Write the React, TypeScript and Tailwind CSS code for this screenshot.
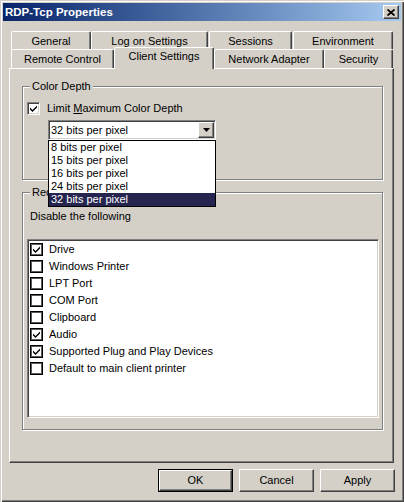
import React from "react";

const raised =
  "bg-[#d4d0c8] border border-t-white border-l-white border-r-[#404040] border-b-[#404040] shadow-[inset_-1px_-1px_0_#808080]";
const sunken =
  "border border-t-[#808080] border-l-[#808080] border-r-white border-b-white shadow-[inset_1px_1px_0_#404040,inset_-1px_-1px_0_#d4d0c8]";
const etched =
  "relative w-[361px] border border-[#808080] shadow-[1px_1px_0_#fff,inset_1px_1px_0_#fff]";

function CheckMark() {
  return (
    <svg width="7" height="7" viewBox="0 0 7 7">
      <path d="M0 2.5L2.5 5L7 0.5V2.5L2.5 7L0 4.5Z" fill="#000" />
    </svg>
  );
}

function Check3D({ checked }: { checked: boolean }) {
  return (
    <div className={`w-[13px] h-[13px] bg-white shrink-0 flex items-center justify-center ${sunken}`}>
      {checked && <CheckMark />}
    </div>
  );
}

function FlatCheck({ checked }: { checked: boolean }) {
  return (
    <div className="w-[13px] h-[13px] bg-white shrink-0 flex items-center justify-center border border-black shadow-[inset_0_0_0_1px_#5a5a5a]">
      {checked && <CheckMark />}
    </div>
  );
}

function Tab({ label, className, selected }: { label: string; className: string; selected?: boolean }) {
  return (
    <div
      className={`${className} shrink-0 bg-[#d4d0c8] border-t border-l border-r border-t-white border-l-white border-r-[#404040] rounded-t-[2px] shadow-[inset_-1px_0_0_#808080] text-center leading-[13px] ${
        selected ? "h-[22px] -mb-px" : "h-full"
      }`}
    >
      {label}
    </div>
  );
}

const items: [string, boolean][] = [
  ["Drive", true],
  ["Windows Printer", false],
  ["LPT Port", false],
  ["COM Port", false],
  ["Clipboard", false],
  ["Audio", true],
  ["Supported Plug and Play Devices", true],
  ["Default to main client printer", false],
];

const depths = ["8 bits per pixel", "15 bits per pixel", "16 bits per pixel", "24 bits per pixel", "32 bits per pixel"];

export default function App() {
  return (
    <div className="w-[404px] h-[502px] p-[3px] bg-[#d4d0c8] text-black text-[11px] font-['Liberation_Sans',Arial,sans-serif] shadow-[inset_1px_1px_0_#d4d0c8,inset_2px_2px_0_#fff,inset_-1px_-1px_0_#404040,inset_-2px_-2px_0_#808080] overflow-hidden select-none">
      {/* Title bar */}
      <div className="h-[18px] flex items-center justify-between bg-linear-to-r from-[#0a246a] to-[#a6caf0]">
        <span className="pl-[2px] text-white font-bold text-[11.5px] leading-[13px]">RDP-Tcp Properties</span>
        <div className={`w-[16px] h-[14px] mr-[2px] flex items-center justify-center ${raised}`}>
          <svg width="8" height="7" viewBox="0 0 8 7">
            <path d="M0.5 0.5L7.5 6.5M7.5 0.5L0.5 6.5" stroke="#000" strokeWidth="1.8" />
          </svg>
        </div>
      </div>

      {/* Tabs row 1 */}
      <div className="mt-[10px] ml-[6px] flex h-[18px]">
        <Tab label="General" className="ml-[2px] w-[80px] pt-[3px]" />
        <Tab label="Log on Settings" className="w-[117px] pt-[3px]" />
        <Tab label="Sessions" className="ml-[1px] w-[83px] pt-[3px]" />
        <Tab label="Environment" className="ml-[1px] w-[100px] pt-[3px]" />
      </div>
      {/* Tabs row 2 */}
      <div className="relative z-10 ml-[6px] flex items-end h-[19px]">
        <Tab label="Remote Control" className="ml-[2px] w-[103px] pt-[3px]" />
        <Tab label="Client Settings" className="w-[100px] pt-[2px]" selected />
        <Tab label="Network Adapter" className="w-[110px] pt-[3px]" />
        <Tab label="Security" className="w-[69px] pt-[3px]" />
      </div>

      {/* Panel */}
      <div className="ml-[6px] w-[385px] h-[395px] border-t border-l border-r border-b border-t-white border-l-white border-r-[#404040] border-b-[#404040] shadow-[inset_-1px_-1px_0_#808080] pt-[17px] pl-[12px]">
        {/* Color Depth */}
        <div className={`${etched} h-[94px] pl-[4px] pt-[15px]`}>
          <span className="absolute -top-[7px] left-[7px] px-[2px] bg-[#d4d0c8] leading-[13px]">Color Depth</span>
          <div className="flex items-center gap-[7px] h-[13px]">
            <Check3D checked />
            <span className="leading-[13px]">
              Limit <span className="underline">M</span>aximum Color Depth
            </span>
          </div>
          <div className={`relative mt-[5px] ml-[21px] w-[168px] h-[20px] bg-white flex items-center ${sunken}`}>
            <span className="flex-1 pl-[2px] leading-[13px]">32 bits per pixel</span>
            <div className={`w-[16px] h-[16px] mr-[1px] flex items-center justify-center ${raised}`}>
              <svg width="7" height="4" viewBox="0 0 7 4">
                <path d="M0 0H7L3.5 4Z" fill="#000" />
              </svg>
            </div>
            <div className="absolute z-20 top-[19px] -left-px w-[168px] bg-white border border-black">
              {depths.map((d, i) => (
                <div
                  key={d}
                  className={`h-[13px] leading-[13px] pl-[2px] ${
                    i === depths.length - 1 ? "bg-[#25254f] text-white" : ""
                  }`}
                >
                  {d}
                </div>
              ))}
            </div>
          </div>
        </div>

        {/* Redirection */}
        <div className={`${etched} mt-[12px] h-[238px] pl-[4px] pt-[17px]`}>
          <span className="absolute -top-[7px] left-[7px] px-[2px] bg-[#d4d0c8] leading-[13px]">Redirection</span>
          <div className="pl-[3px] leading-[13px]">Disable the following</div>
          <div className={`mt-[16px] w-[352px] h-[179px] bg-white pt-[1px] ${sunken}`}>
            {items.map(([label, checked]) => (
              <div key={label} className="h-[17px] flex items-center gap-[6px] pl-[2px]">
                <FlatCheck checked={checked} />
                <span className="leading-[13px]">{label}</span>
              </div>
            ))}
          </div>
        </div>
      </div>

      {/* Buttons */}
      <div className="mt-[6px] ml-[6px] w-[386px] flex justify-end gap-[6px]">
        <div className="w-[75px] h-[23px] border border-black">
          <div className={`w-full h-full flex items-center justify-center ${raised}`}>OK</div>
        </div>
        <div className={`w-[75px] h-[23px] flex items-center justify-center ${raised}`}>Cancel</div>
        <div className={`w-[75px] h-[23px] flex items-center justify-center ${raised}`}>Apply</div>
      </div>
    </div>
  );
}
